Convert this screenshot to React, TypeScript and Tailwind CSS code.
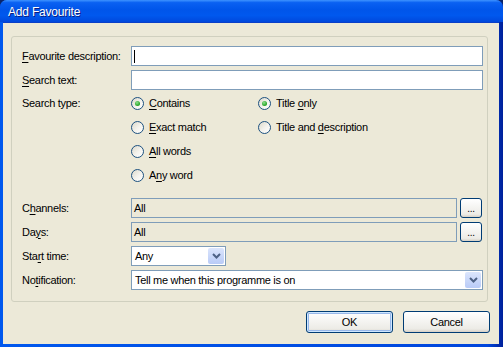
import React from 'react';

const font = { fontFamily: '"Liberation Sans", Arial, sans-serif' };

function U({ children }: { children: React.ReactNode }) {
  return <span className="underline underline-offset-[2px] decoration-[1px]">{children}</span>;
}

function Radio({ checked, children }: { checked?: boolean; children: React.ReactNode }) {
  return (
    <div className="flex h-[24px] items-center gap-[5px]">
      <div className="flex h-[13px] w-[13px] items-center justify-center rounded-full border border-[#1c5180] bg-[linear-gradient(135deg,#dcd9cb_0%,#f4f3ee_55%,#ffffff_100%)]">
        {checked && <div className="h-[5px] w-[5px] rounded-full bg-[radial-gradient(circle_at_40%_35%,#8ee08e,#21a121_70%)]" />}
      </div>
      <span>{children}</span>
    </div>
  );
}

function EllipsisButton() {
  return (
    <div className="flex h-[20px] w-[22px] items-end justify-center rounded-[3px] border border-[#003c74] bg-[linear-gradient(180deg,#ffffff,#ecebe6_85%,#d6d0c5)] pb-[3px] text-[10px] leading-none">
      ...
    </div>
  );
}

function ComboArrow() {
  return (
    <div className="flex h-[16px] w-[16px] items-center justify-center rounded-[2px] bg-[linear-gradient(180deg,#dbe5fc,#b9cbf7)]">
      <svg width="9" height="6" viewBox="0 0 9 6">
        <path d="M1 1 L4.5 4.5 L8 1" stroke="#4d6185" strokeWidth="2" fill="none" />
      </svg>
    </div>
  );
}

export default function App() {
  return (
    <div className="h-[347px] w-[503px] overflow-hidden bg-[#0a246a] text-[11px] tracking-[-0.3px] text-black" style={font}>
      <div className="flex h-full w-full flex-col overflow-hidden rounded-t-[7px] bg-[linear-gradient(90deg,#0058ee,#0046dc_97%,#00209a)]">
        {/* Title bar */}
        <div className="flex h-[22px] shrink-0 items-center bg-[linear-gradient(180deg,#3e93ff_0%,#0a61f2_12%,#0055ea_45%,#0058ee_70%,#0048dc_100%)] pl-[8px] pt-[1px] text-[12px] tracking-[-0.2px] text-white [text-shadow:1px_1px_0_#0a1e80]">
          Add Favourite
        </div>
        {/* Body */}
        <div className="mb-[3px] ml-[3px] mr-[4px] flex flex-1 flex-col border-t border-[#0a3fc8] bg-[#ece9d8]">
          <div className="ml-[8px] mt-[13px] flex h-[266px] w-[477px] flex-col rounded-[3px] border border-[#d0d0bf] pl-[10px] pr-[4px] pt-[9px]">
            <div className="flex h-[20px] items-center">
              <div className="w-[109px]"><U>F</U>avourite description:</div>
              <div className="flex h-[20px] flex-1 items-center border border-[#7f9db9] bg-white pl-[2px]">
                <div className="h-[13px] w-[1px] bg-black" />
              </div>
            </div>
            <div className="mt-[4px] flex h-[20px] items-center">
              <div className="w-[109px]"><U>S</U>earch text:</div>
              <div className="h-[20px] flex-1 border border-[#7f9db9] bg-white" />
            </div>
            <div className="mt-[1px] flex">
              <div className="flex h-[24px] w-[109px] items-center">Search type:</div>
              <div className="flex w-[127px] flex-col">
                <Radio checked><U>C</U>ontains</Radio>
                <Radio><U>E</U>xact match</Radio>
                <Radio><U>A</U>ll words</Radio>
                <Radio>A<U>n</U>y word</Radio>
              </div>
              <div className="flex flex-col">
                <Radio checked>Title <U>o</U>nly</Radio>
                <Radio>Title and <U>d</U>escription</Radio>
              </div>
            </div>
            <div className="mt-[11px] flex h-[20px] items-center">
              <div className="w-[109px]">C<U>h</U>annels:</div>
              <div className="flex h-[20px] flex-1 items-center border border-[#7f9db9] pl-[2px]">All</div>
              <div className="ml-[3px] w-[23px]"><EllipsisButton /></div>
            </div>
            <div className="mt-[4px] flex h-[20px] items-center">
              <div className="w-[109px]">Da<U>y</U>s:</div>
              <div className="flex h-[20px] flex-1 items-center border border-[#7f9db9] pl-[2px]">All</div>
              <div className="ml-[3px] w-[23px]"><EllipsisButton /></div>
            </div>
            <div className="mt-[4px] flex h-[20px] items-center">
              <div className="w-[109px]">Sta<U>r</U>t time:</div>
              <div className="flex h-[20px] w-[95px] items-center justify-between border border-[#7f9db9] bg-white pl-[3px] pr-[1px]">
                <span>Any</span>
                <ComboArrow />
              </div>
            </div>
            <div className="mt-[4px] flex h-[20px] items-center">
              <div className="w-[109px]">No<U>t</U>ification:</div>
              <div className="flex h-[20px] flex-1 items-center justify-between border border-[#7f9db9] bg-white pl-[3px] pr-[1px]">
                <span>Tell me when this programme is on</span>
                <ComboArrow />
              </div>
            </div>
          </div>
          <div className="mr-[9px] mt-[9px] flex justify-end gap-[10px]">
            <div className="flex h-[22px] w-[87px] items-center justify-center rounded-[3px] border border-[#003c74] bg-[linear-gradient(180deg,#ffffff,#ecebe6_85%,#d6d0c5)] shadow-[inset_0_0_0_1px_#cee7ff,inset_0_0_0_2px_#98b8ea]">
              OK
            </div>
            <div className="flex h-[22px] w-[87px] items-center justify-center rounded-[3px] border border-[#003c74] bg-[linear-gradient(180deg,#ffffff,#ecebe6_85%,#d6d0c5)]">
              Cancel
            </div>
          </div>
        </div>
      </div>
    </div>
  );
}
